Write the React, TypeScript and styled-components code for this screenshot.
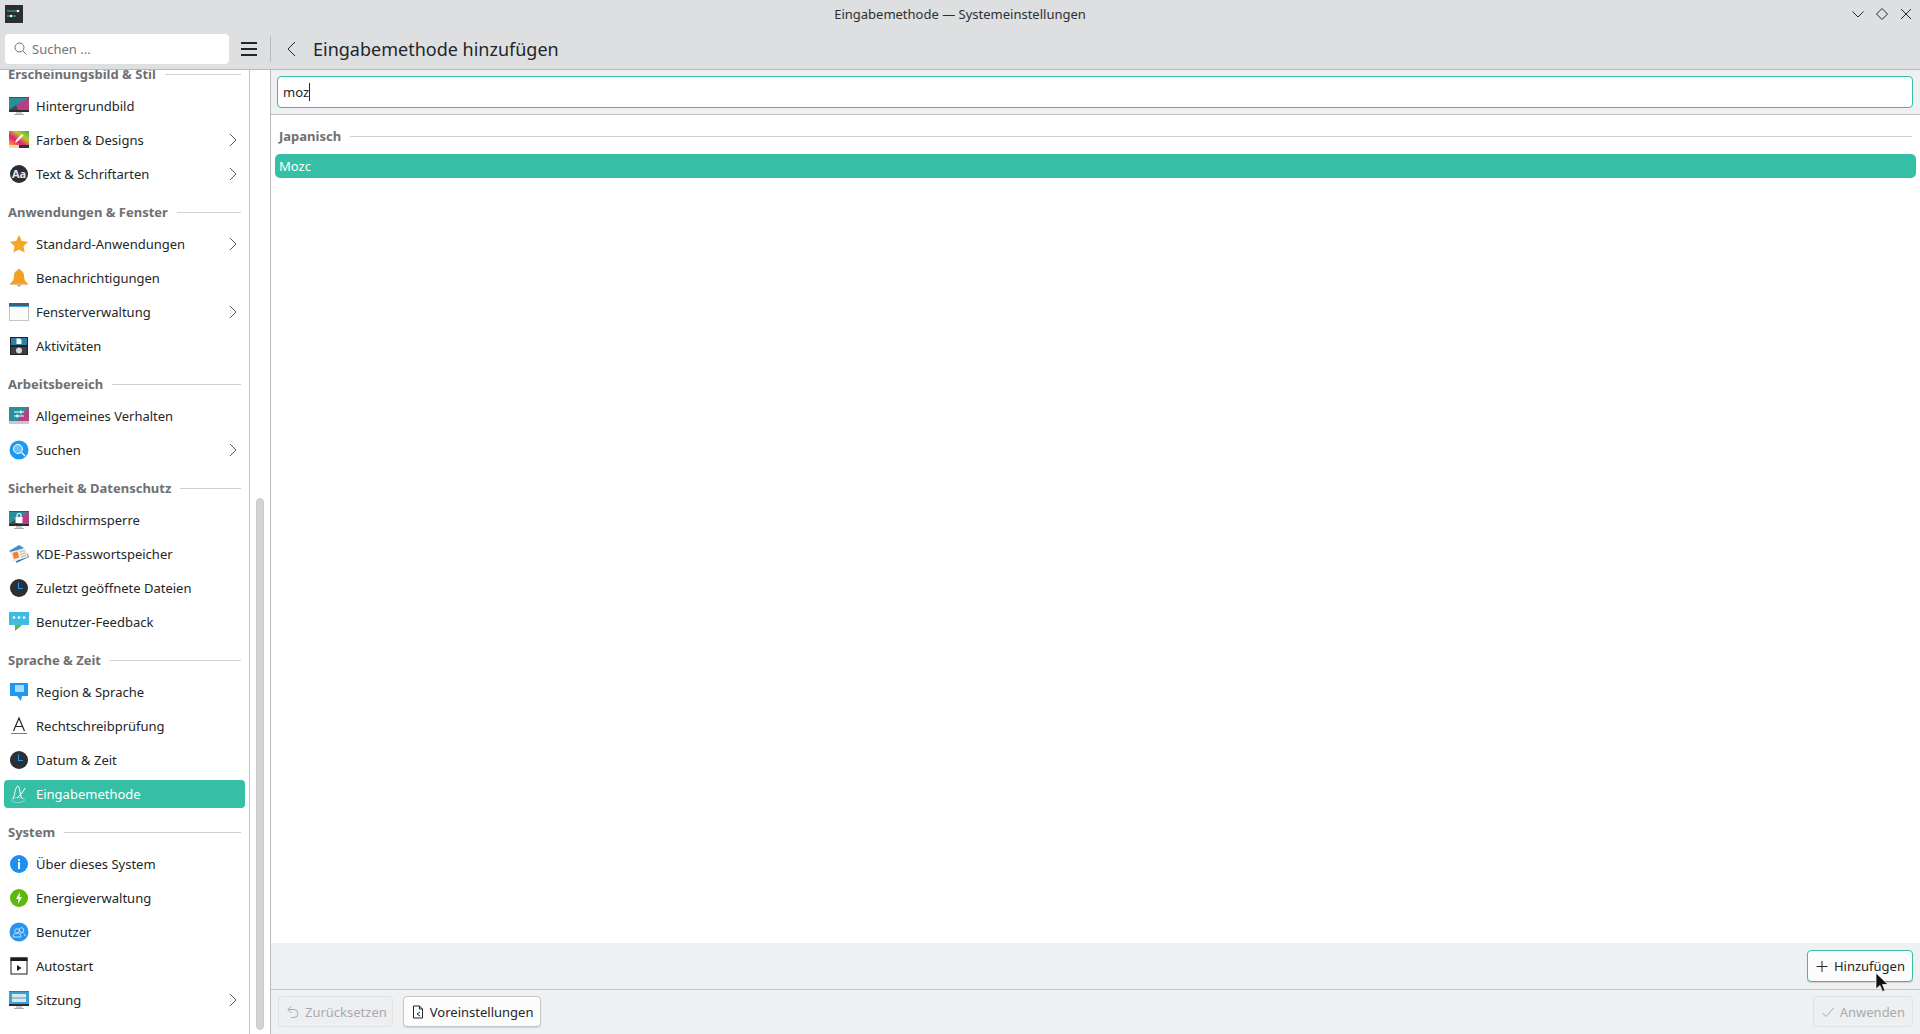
import React from "react";
import styled, { createGlobalStyle } from "styled-components";

const GlobalStyle = createGlobalStyle`
	html, body {
		margin: 0;
		padding: 0;
		background: #ffffff;
	}
	body {
		font-family: "Noto Sans", "Open Sans", sans-serif;
		font-size: 13px;
		color: #232629;
		overflow: hidden;
	}
`;

const Window = styled.div`
	width: 1920px;
	height: 1034px;
	display: flex;
	flex-direction: column;
	position: relative;
	overflow: hidden;
`;

const TitleBar = styled.header`
	height: 28px;
	flex: none;
	background: #dedfe1;
	display: flex;
	align-items: center;
	justify-content: space-between;
	padding: 0 6px 0 5px;
	position: relative;
`;

const WindowTitle = styled.div`
	position: absolute;
	left: 0;
	right: 0;
	text-align: center;
	line-height: 28px;
	color: #2c2f32;
`;

const WindowButtons = styled.div`
	display: flex;
	align-items: center;
	gap: 8px;
`;

const ToolBar = styled.div`
	height: 41px;
	flex: none;
	background: #dedfe1;
	border-bottom: 1px solid #b9babc;
	display: flex;
	align-items: center;
`;

const SearchBox = styled.div`
	width: 224px;
	height: 30px;
	margin-left: 5px;
	box-sizing: border-box;
	background: #ffffff;
	border-radius: 4px;
	display: flex;
	align-items: center;
	gap: 5px;
	padding-left: 9px;
	color: #717477;
`;

const MenuButton = styled.div`
	width: 16px;
	margin-left: 12px;
	display: flex;
	flex-direction: column;
	gap: 4px;
	span {
		display: block;
		height: 2px;
		background: #232629;
	}
`;

const ToolSeparator = styled.div`
	width: 1px;
	height: 26px;
	margin-left: 13px;
	background: #b9babc;
`;

const BackButton = styled.div`
	margin-left: 15px;
	width: 10px;
	display: flex;
	align-items: center;
`;

const PageTitle = styled.h1`
	margin: 0 0 0 17px;
	font-size: 18px;
	font-weight: 400;
	color: #232629;
`;

const Body = styled.div`
	flex: 1;
	min-height: 0;
	display: flex;
`;

const Sidebar = styled.aside`
	width: 271px;
	flex: none;
	display: flex;
	box-sizing: border-box;
	border-right: 1px solid #b9babc;
	background: #ffffff;
`;

const SideList = styled.nav`
	width: 250px;
	flex: none;
	box-sizing: border-box;
	border-right: 1px solid #c4c5c7;
	overflow: hidden;
	display: flex;
	flex-direction: column;
`;

const ScrollTrack = styled.div`
	flex: 1;
	display: flex;
	padding: 428px 6px 4px;
`;

const ScrollThumb = styled.div`
	flex: 1;
	background: #d3d4d5;
	border-radius: 4px;
	border: 1px solid #cbcccd;
`;

const SectionHead = styled.div<{ $first?: boolean }>`
	height: 36px;
	flex: none;
	margin-top: ${(p) => (p.$first ? "-17px" : "0")};
	box-sizing: border-box;
	padding: 6px 8px 0 8px;
	display: flex;
	align-items: center;
	gap: 9px;
	font-weight: 700;
	color: #6e7073;
	&::after {
		content: "";
		flex: 1;
		height: 1px;
		background: #cfd0d1;
	}
`;

const Row = styled.div<{ $active?: boolean }>`
	height: 28px;
	flex: none;
	margin: 3px 4px;
	border-radius: 4px;
	display: flex;
	align-items: center;
	padding: 0 7px 0 5px;
	gap: 7px;
	color: ${(p) => (p.$active ? "#ffffff" : "#232629")};
	background: ${(p) => (p.$active ? "#35bfa4" : "transparent")};
`;

const RowLabel = styled.span`
	flex: 1;
	white-space: nowrap;
`;

const Main = styled.main`
	flex: 1;
	min-width: 0;
	display: flex;
	flex-direction: column;
`;

const FilterBar = styled.div`
	height: 45px;
	flex: none;
	box-sizing: border-box;
	background: #eff0f1;
	border-bottom: 1px solid #bfc0c2;
	padding: 6px 7px 6px 6px;
`;

const FilterInput = styled.div`
	height: 32px;
	box-sizing: border-box;
	background: #ffffff;
	border: 1px solid #35bfa4;
	border-radius: 4px;
	display: flex;
	align-items: center;
	padding-left: 5px;
`;

const Caret = styled.span`
	display: inline-block;
	width: 1px;
	height: 18px;
	background: #232629;
`;

const ListArea = styled.div`
	flex: 1;
	min-height: 0;
	background: #ffffff;
	padding: 0 4px;
`;

const GroupHead = styled.div`
	height: 39px;
	box-sizing: border-box;
	padding: 3px 4px 0 4px;
	display: flex;
	align-items: center;
	gap: 9px;
	font-weight: 700;
	color: #6e7073;
	&::after {
		content: "";
		flex: 1;
		height: 1px;
		background: #cfd0d1;
	}
`;

const ListItem = styled.div`
	height: 24px;
	background: #35bfa4;
	border-radius: 5px;
	color: #ffffff;
	display: flex;
	align-items: center;
	padding-left: 4px;
`;

const ActionBar = styled.div`
	height: 47px;
	flex: none;
	box-sizing: border-box;
	background: #eff0f1;
	border-bottom: 1px solid #c4c5c7;
	padding: 7px 7px 0 0;
	display: flex;
	justify-content: flex-end;
`;

const Footer = styled.footer`
	height: 44px;
	flex: none;
	box-sizing: border-box;
	background: #eff0f1;
	padding: 6px 7px 0 7px;
	display: flex;
	gap: 10px;
`;

const Spacer = styled.div`
	flex: 1;
`;

const Button = styled.div<{ $variant?: "focus" | "off" }>`
	height: ${(p) => (p.$variant === "focus" ? "32px" : "31px")};
	box-sizing: border-box;
	display: flex;
	align-items: center;
	gap: 5px;
	padding: 0 7px;
	border-radius: 4px;
	border: 1px solid
		${(p) =>
			p.$variant === "focus"
				? "#35bfa4"
				: p.$variant === "off"
				? "#e0e1e2"
				: "#c6c7c9"};
	background: ${(p) => (p.$variant === "off" ? "#eeeff0" : "#fcfcfc")};
	color: ${(p) => (p.$variant === "off" ? "#a9abad" : "#232629")};
	box-shadow: ${(p) =>
		p.$variant === "off" ? "none" : "0 1px 1px rgba(0, 0, 0, 0.12)"};
	white-space: nowrap;
`;

const ResetButton = styled(Button)`
	padding-right: 5px;
`;

const Cursor = styled.svg`
	position: absolute;
	left: 1875px;
	top: 972px;
`;

const Chevron = () => (
	<svg width="9" height="14" viewBox="0 0 9 14">
		<path d="M1 1l6 6-6 6" fill="none" stroke="#55585b" strokeWidth="1" />
	</svg>
);

const Ico = ({ children }: { children: React.ReactNode }) => (
	<svg width="20" height="20" viewBox="0 0 20 20" style={{ flex: "none" }}>
		{children}
	</svg>
);

const Monitor = ({ children }: { children?: React.ReactNode }) => (
	<Ico>
		<rect x="0" y="1" width="20" height="15" fill="#2a2e32" />
		<rect x="7" y="16" width="6" height="2" fill="#c8c9ca" />
		<rect x="5" y="18" width="10" height="1" fill="#a8a9aa" />
		<path d="M0 1.500h20V14H0z" fill="#2a8f9c" />
		<path d="M20 1.500V14H9L7 9z" fill="#b53f80" />
		<path d="M0 14l7-5 2 5z" fill="#3f4a50" />
		{children}
	</Ico>
);

const icons: Record<string, React.ReactNode> = {
	wallpaper: <Monitor />,
	colors: (
		<Ico>
			<defs>
				<linearGradient id="rainbow" x1="0" y1="1" x2="1" y2="0">
					<stop offset="0" stopColor="#f7b21b" />
					<stop offset="0.35" stopColor="#e5197c" />
					<stop offset="0.65" stopColor="#c0c81e" />
					<stop offset="1" stopColor="#2fb26a" />
				</linearGradient>
			</defs>
			<rect x="0" y="1" width="20" height="14" fill="url(#rainbow)" />
			<rect x="0" y="15" width="10" height="3" fill="#f5d9b5" />
			<rect x="10" y="15" width="10" height="3" fill="#2f3336" />
			<path d="M6 13l1-3 6-6 1.500 1.500-6 6z" fill="#ffffff" />
		</Ico>
	),
	fonts: (
		<Ico>
			<circle cx="10" cy="10" r="9" fill="#2a2e32" />
			<text
				x="10"
				y="14"
				fontSize="11"
				fontWeight="700"
				textAnchor="middle"
				fill="#e8e8e8"
				fontFamily="Noto Sans, sans-serif"
			>
				Aa
			</text>
		</Ico>
	),
	star: (
		<Ico>
			<path
				d="M10 1l2.800 6 6.400.8-4.700 4.400 1.200 6.400L10 15.400 4.300 18.600l1.200-6.400L.8 7.800 7.200 7z"
				fill="#f5a623"
			/>
		</Ico>
	),
	bell: (
		<Ico>
			<path
				d="M10 1c1 0 1.600.6 1.700 1.500C14 3.200 15 5 15 8c0 3.500 1 5.500 4 7.500H1C4 13.500 5 11.500 5 8c0-3 1-4.800 3.300-5.500C8.400 1.600 9 1 10 1z"
				fill="#f2a024"
			/>
			<path d="M1 15.500h18L19 16.500H1z" fill="#d5851a" />
			<path d="M8 17h4c0 2-4 2-4 0z" fill="#a8a9aa" />
		</Ico>
	),
	windows: (
		<Ico>
			<rect x="0.500" y="1.500" width="19" height="17" fill="#fcfcfc" stroke="#c4c5c7" />
			<rect x="0" y="1" width="20" height="4" fill="#54595e" />
			<rect x="0" y="4" width="20" height="1" fill="#3daee9" />
		</Ico>
	),
	activities: (
		<Ico>
			<rect x="1" y="1" width="18" height="18" fill="#1e2226" />
			<rect x="2" y="2" width="16" height="7" fill="#2e7fa8" />
			<rect x="2" y="11" width="16" height="7" fill="#3d4145" />
			<path d="M7.500 2.500h3.500l1.500 1.500v4h-5z" fill="#ffffff" />
			<circle cx="10" cy="14.500" r="3" fill="#d8d9da" />
		</Ico>
	),
	behavior: (
		<Ico>
			<rect x="0" y="1" width="20" height="14" fill="#2a8f9c" />
			<path d="M20 1v14H8z" fill="#b53f80" />
			<rect x="0" y="15" width="20" height="3" fill="#c8c9ca" />
			<path d="M5 6h10M5 10h10" stroke="#ffffff" strokeWidth="1.200" />
			<path d="M11 4.500h1.500v3H11zM7.500 8.500h1.500v3H7.500z" fill="#ffffff" />
		</Ico>
	),
	search: (
		<Ico>
			<circle cx="10" cy="10" r="9.500" fill="#1d99f3" />
			<circle cx="9" cy="9" r="4.500" fill="#6cc1f7" stroke="#ffffff" strokeWidth="1" />
			<path d="M12.500 12.500l3.500 3.500" stroke="#ffffff" strokeWidth="1.300" />
		</Ico>
	),
	lock: (
		<Monitor>
			<rect x="6.500" y="7" width="7" height="6" fill="#ffffff" />
			<path d="M8 7V5.500a2 2 0 0 1 4 0V7" fill="none" stroke="#ffffff" strokeWidth="1.200" />
		</Monitor>
	),
	wallet: (
		<Ico>
			<path d="M0 7l10-6 5 3-10 7z" fill="#3d8fd1" />
			<path d="M7 19l13-6-2-4-10 5z" fill="#2b6da8" />
			<path d="M1 8l15-4 3 9-15 5z" fill="#f0ece2" />
			<path d="M3.500 9l5-1.500 1.500 6-5 1.500z" fill="#ef7d3c" />
			<path d="M11 8l5-1.500M11.500 10.500l5-1.500M12 13l5-1.500" stroke="#a9abad" strokeWidth="0.800" />
		</Ico>
	),
	clock: (
		<Ico>
			<circle cx="10" cy="10" r="9" fill="#2c3035" />
			<path d="M9.500 4.500v6H14" fill="none" stroke="#1d99f3" strokeWidth="1.100" />
		</Ico>
	),
	feedback: (
		<Ico>
			<path d="M0 0h20v13H11l-5 4v-4H0z" fill="#41bce0" />
			<path d="M6 13h7l-7 6z" fill="#5fb832" />
			<circle cx="5" cy="5.500" r="1.300" fill="#ffffff" />
			<circle cx="10" cy="5.500" r="1.300" fill="#ffffff" />
			<circle cx="15" cy="5.500" r="1.300" fill="#ffffff" />
		</Ico>
	),
	region: (
		<Ico>
			<path d="M1 1h18v13h-6l-1 5-4-5H1z" fill="#1d99f3" />
			<rect x="6" y="3" width="9" height="7" fill="#a8dcfb" />
		</Ico>
	),
	spell: (
		<Ico>
			<path d="M4.500 15L10 2l5.500 13M6.500 10.500h7" fill="none" stroke="#232629" strokeWidth="1.200" />
			<rect x="2" y="17" width="16" height="1" fill="#27ae60" />
		</Ico>
	),
	input: (
		<Ico>
			<path
				d="M4 15C6 11 6 3 9 2c1 0 1.500 3 2 6s1 6 2.500 6.500M16 4c-2 4-5 8-8 10"
				fill="none"
				stroke="#ffffff"
				strokeWidth="1"
			/>
			<ellipse cx="9" cy="16" rx="6.500" ry="2.500" fill="none" stroke="#ffffff" strokeOpacity="0.400" />
		</Ico>
	),
	about: (
		<Ico>
			<circle cx="10" cy="10" r="9" fill="#1d8ff0" />
			<rect x="9" y="8" width="2" height="7" fill="#ffffff" />
			<rect x="9" y="5" width="2" height="2" fill="#ffffff" />
		</Ico>
	),
	power: (
		<Ico>
			<circle cx="10" cy="10" r="9" fill="#5cb80c" />
			<path d="M11 4L7 11h2.500L9 16l4-7h-2.500z" fill="#ffffff" />
		</Ico>
	),
	users: (
		<Ico>
			<circle cx="10" cy="10" r="9.500" fill="#2a93ef" />
			<circle cx="8" cy="9" r="2.300" fill="none" stroke="#bfe0fb" />
			<circle cx="12.500" cy="8" r="2.300" fill="none" stroke="#bfe0fb" />
			<path d="M4 15c0-3 2-4 4-4s4 1 4 4zM11 11c3-1 5 .5 5 3" fill="none" stroke="#bfe0fb" />
		</Ico>
	),
	autostart: (
		<Ico>
			<rect x="2" y="2" width="16" height="16" fill="#ffffff" stroke="#1a1c1e" strokeWidth="1" />
			<rect x="1.500" y="1.500" width="17" height="3.500" fill="#1a1c1e" />
			<path d="M8 9l4.500 3L8 15z" fill="#1a1c1e" />
		</Ico>
	),
	session: (
		<Monitor>
			<rect x="0" y="1.500" width="20" height="12.500" fill="#3ca0d0" />
			<rect x="3" y="4" width="14" height="3.500" fill="#dfe6ea" />
			<rect x="3" y="8.500" width="14" height="3.500" fill="#dfe6ea" />
		</Monitor>
	),
};

type Entry = { label: string; icon: string; more?: boolean; active?: boolean };
type Section = { title: string; items: Entry[] };

const sections: Section[] = [
	{
		title: "Erscheinungsbild & Stil",
		items: [
			{ label: "Hintergrundbild", icon: "wallpaper" },
			{ label: "Farben & Designs", icon: "colors", more: true },
			{ label: "Text & Schriftarten", icon: "fonts", more: true },
		],
	},
	{
		title: "Anwendungen & Fenster",
		items: [
			{ label: "Standard-Anwendungen", icon: "star", more: true },
			{ label: "Benachrichtigungen", icon: "bell" },
			{ label: "Fensterverwaltung", icon: "windows", more: true },
			{ label: "Aktivitäten", icon: "activities" },
		],
	},
	{
		title: "Arbeitsbereich",
		items: [
			{ label: "Allgemeines Verhalten", icon: "behavior" },
			{ label: "Suchen", icon: "search", more: true },
		],
	},
	{
		title: "Sicherheit & Datenschutz",
		items: [
			{ label: "Bildschirmsperre", icon: "lock" },
			{ label: "KDE-Passwortspeicher", icon: "wallet" },
			{ label: "Zuletzt geöffnete Dateien", icon: "clock" },
			{ label: "Benutzer-Feedback", icon: "feedback" },
		],
	},
	{
		title: "Sprache & Zeit",
		items: [
			{ label: "Region & Sprache", icon: "region" },
			{ label: "Rechtschreibprüfung", icon: "spell" },
			{ label: "Datum & Zeit", icon: "clock" },
			{ label: "Eingabemethode", icon: "input", active: true },
		],
	},
	{
		title: "System",
		items: [
			{ label: "Über dieses System", icon: "about" },
			{ label: "Energieverwaltung", icon: "power" },
			{ label: "Benutzer", icon: "users" },
			{ label: "Autostart", icon: "autostart" },
			{ label: "Sitzung", icon: "session", more: true },
		],
	},
];

export default function App() {
	return (
		<Window>
			<GlobalStyle />
			<TitleBar>
				<svg width="18" height="18" viewBox="0 0 18 18">
					<rect width="18" height="18" fill="#2a2e32" />
					<path d="M2 6h12M2 11h9" stroke="#35bfa4" strokeWidth="1" />
					<circle cx="13" cy="6" r="1.300" fill="#e8f6f3" />
					<circle cx="6" cy="11" r="1.300" fill="#e8f6f3" />
				</svg>
				<WindowTitle>Eingabemethode — Systemeinstellungen</WindowTitle>
				<WindowButtons>
					<svg width="16" height="16" viewBox="0 0 16 16">
						<path d="M2.500 5.500L8 11l5.500-5.500" fill="none" stroke="#232629" />
					</svg>
					<svg width="16" height="16" viewBox="0 0 16 16">
						<path d="M8 2.500L13.500 8 8 13.500 2.500 8z" fill="none" stroke="#232629" />
					</svg>
					<svg width="16" height="16" viewBox="0 0 16 16">
						<path d="M3 3l10 10M13 3L3 13" fill="none" stroke="#232629" />
					</svg>
				</WindowButtons>
			</TitleBar>
			<ToolBar>
				<SearchBox>
					<svg width="13" height="13" viewBox="0 0 13 13">
						<circle cx="5.500" cy="5.500" r="4.500" fill="none" stroke="#6e7073" />
						<path d="M9 9l3.500 3.500" stroke="#6e7073" />
					</svg>
					Suchen ...
				</SearchBox>
				<MenuButton>
					<span />
					<span />
					<span />
				</MenuButton>
				<ToolSeparator />
				<BackButton>
					<svg width="10" height="16" viewBox="0 0 10 16">
						<path d="M9 1L2 8l7 7" fill="none" stroke="#232629" />
					</svg>
				</BackButton>
				<PageTitle>Eingabemethode hinzufügen</PageTitle>
			</ToolBar>
			<Body>
				<Sidebar>
					<SideList>
						{sections.map((section, i) => (
							<React.Fragment key={section.title}>
								<SectionHead $first={i === 0}>{section.title}</SectionHead>
								{section.items.map((item) => (
									<Row key={item.label} $active={item.active}>
										{icons[item.icon]}
										<RowLabel>{item.label}</RowLabel>
										{item.more && <Chevron />}
									</Row>
								))}
							</React.Fragment>
						))}
					</SideList>
					<ScrollTrack>
						<ScrollThumb />
					</ScrollTrack>
				</Sidebar>
				<Main>
					<FilterBar>
						<FilterInput>
							moz
							<Caret />
						</FilterInput>
					</FilterBar>
					<ListArea>
						<GroupHead>Japanisch</GroupHead>
						<ListItem>Mozc</ListItem>
					</ListArea>
					<ActionBar>
						<Button $variant="focus">
							<svg width="14" height="13" viewBox="0 0 13 13">
								<path d="M6.500 1v11M1 6.500h11" stroke="#232629" />
							</svg>
							Hinzufügen
						</Button>
					</ActionBar>
					<Footer>
						<ResetButton $variant="off">
							<svg width="14" height="14" viewBox="0 0 14 14">
								<path
									d="M5.500 1L2 4.500 5.500 8M2 4.500h6a4 4 0 0 1 0 8H5"
									fill="none"
									stroke="#a9abad"
								/>
							</svg>
							Zurücksetzen
						</ResetButton>
						<Button>
							<svg width="14" height="14" viewBox="0 0 14 14">
								<path
									d="M2.500 1h6l3 3v9h-9zM8.500 1v3h3"
									fill="none"
									stroke="#232629"
								/>
								<path d="M9 7L6 9l3 2" fill="none" stroke="#232629" />
							</svg>
							Voreinstellungen
						</Button>
						<Spacer />
						<Button $variant="off">
							<svg width="14" height="14" viewBox="0 0 14 14">
								<path d="M1.500 8l3.500 3.500L12.500 3" fill="none" stroke="#a9abad" />
							</svg>
							Anwenden
						</Button>
					</Footer>
				</Main>
			</Body>
			<Cursor width="14" height="22" viewBox="0 0 14 22">
				<path
					d="M1 1v16l4-3.500 2.500 6 2.500-1-2.500-6H13z"
					fill="#111"
					stroke="#fff"
					strokeWidth="0.700"
				/>
			</Cursor>
		</Window>
	);
}
